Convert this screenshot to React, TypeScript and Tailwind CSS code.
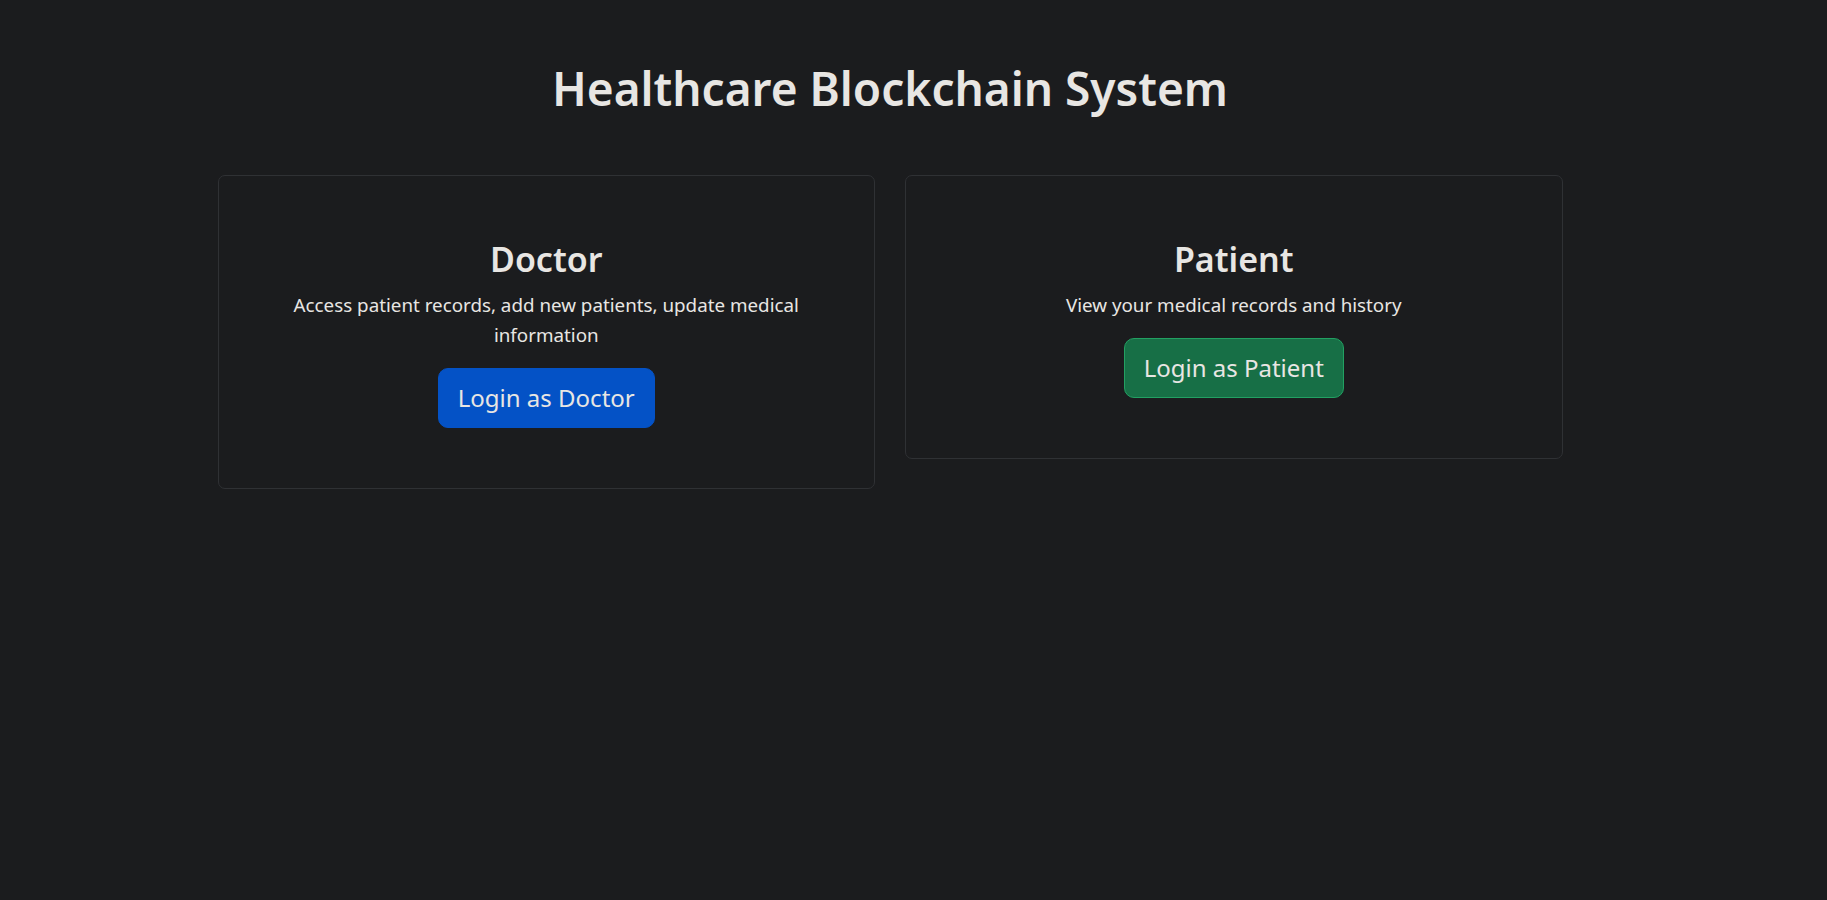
import React from "react";

const roles = [
  {
    id: "doctor",
    title: "Doctor",
    description: "Access patient records, add new patients, update medical information",
    button: "Login as Doctor",
    buttonClass: "bg-[#0452c6] border-[#0452c6] hover:bg-[#0447ab]",
  },
  {
    id: "patient",
    title: "Patient",
    description: "View your medical records and history",
    button: "Login as Patient",
    buttonClass: "bg-[#176f46] border-[#22a062] hover:bg-[#135c3a]",
  },
];

export default function App() {
  return (
    <div
      className="min-h-screen w-full bg-[#1b1c1e] text-[#e8e6e3]"
      style={{ fontFamily: '"Segoe UI", "Noto Sans", "Open Sans", sans-serif' }}
    >
      <div className="pr-[47px]">
        <div className="mx-auto w-[1345px] pt-[58px]">
          <h1 className="h-[60px] mb-[57px] text-center text-[46px] leading-[60px] font-semibold">
            Healthcare Blockchain System
          </h1>

          <div className="flex items-start gap-[30px]">
            {roles.map((role) => (
              <div
                key={role.id}
                className="flex-1 rounded-[7px] border border-[#2f3134] bg-[#1b1c1e]"
              >
                <div className="flex flex-col items-center px-[60px] pt-[62px] pb-[60px] text-center">
                  <h3 className="mb-[10px] text-[34px] leading-[42px] font-semibold">
                    {role.title}
                  </h3>
                  <p className="mb-[18px] max-w-[520px] text-[18.8px] leading-[30px]">
                    {role.description}
                  </p>
                  <button
                    className={`h-[60px] rounded-[10px] border px-[19px] text-[24px] leading-[30px] text-[#e8e6e3] ${role.buttonClass}`}
                  >
                    {role.button}
                  </button>
                </div>
              </div>
            ))}
          </div>
        </div>
      </div>
    </div>
  );
}
